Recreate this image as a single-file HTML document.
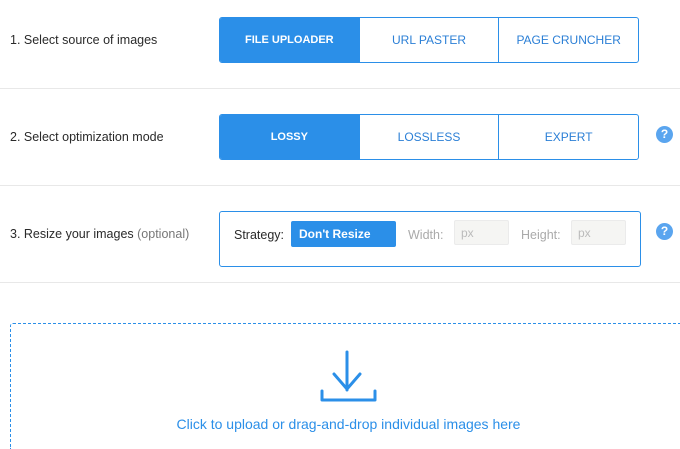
<!DOCTYPE html>
<html><head><meta charset="utf-8"><style>
*{box-sizing:border-box;margin:0;padding:0}
html,body{width:680px;height:449px;overflow:hidden}
body{background:#fff;font-family:"Liberation Sans",sans-serif;color:#333;position:relative}
.abs{position:absolute}
.lbl{font-size:12.5px;color:#2a2a2a;left:10px}
.hr{left:0;width:680px;height:1px;background:#e8e8e8}
.grp{left:219px;width:420px;height:46px;border:1px solid #2b8fe8;border-radius:3px;display:flex;overflow:hidden}
.grp div{flex:1;display:flex;align-items:center;justify-content:center;font-size:12px;color:#2b7fd6;border-left:1px solid #2b8fe8}
.grp div:first-child{border-left:none;background:#2b8fe8;color:#fff;font-weight:bold;font-size:11px}
.q{width:17px;height:17px;border-radius:50%;background:#5aa5ef;color:#fff;font-weight:bold;font-size:12px;text-align:center;line-height:17px;left:656px}
.inp{width:55px;height:25px;background:#f5f5f3;border:1px solid #ebebeb;border-radius:2px;color:#bbb;font-size:12px;padding:5px 6px}
</style></head><body>
<div class="abs lbl" style="top:33px">1. Select source of images</div>
<div class="abs grp" style="top:17px"><div>FILE UPLOADER</div><div>URL PASTER</div><div>PAGE CRUNCHER</div></div>
<div class="abs hr" style="top:88px"></div>
<div class="abs lbl" style="top:130px">2. Select optimization mode</div>
<div class="abs grp" style="top:114px"><div>LOSSY</div><div>LOSSLESS</div><div>EXPERT</div></div>
<div class="abs q" style="top:126px">?</div>
<div class="abs hr" style="top:185px"></div>
<div class="abs lbl" style="top:227px">3. Resize your images <span style="color:#777">(optional)</span></div>
<div class="abs" style="left:219px;top:211px;width:422px;height:56px;border:1px solid #2b8fe8;border-radius:3px"></div>
<div class="abs" style="left:234px;top:228px;font-size:12.5px;color:#2a2a2a">Strategy:</div>
<div class="abs" style="left:291px;top:221px;width:105px;height:26px;background:#2b8fe8;border-radius:2px;color:#fff;font-weight:bold;font-size:12px;padding:6px 8px">Don't Resize</div>
<div class="abs" style="left:408px;top:228px;font-size:12.5px;color:#aaa">Width:</div>
<div class="abs inp" style="left:454px;top:220px">px</div>
<div class="abs" style="left:521px;top:228px;font-size:12.5px;color:#aaa">Height:</div>
<div class="abs inp" style="left:571px;top:220px">px</div>
<div class="abs q" style="top:223px">?</div>
<div class="abs hr" style="top:282px"></div>
<div class="abs" style="left:10px;top:323px;width:670px;height:126px;border:1px dashed #2b8fe8;border-right:none;border-bottom:none;border-radius:3px 0 0 0"></div>
<svg class="abs" style="left:316px;top:348px" width="64" height="58" viewBox="0 0 64 58">
<g fill="none" stroke="#2b8fe8" stroke-width="3" stroke-linecap="round" stroke-linejoin="round">
<path d="M31 4V42M18 26L31 41L44 26"/>
<path d="M6 43V52H59V43"/>
</g></svg>
<div class="abs" style="left:0;width:697px;top:416px;text-align:center;font-size:14px;color:#2b8fe8">Click to upload or drag-and-drop individual images here</div>
</body></html>
